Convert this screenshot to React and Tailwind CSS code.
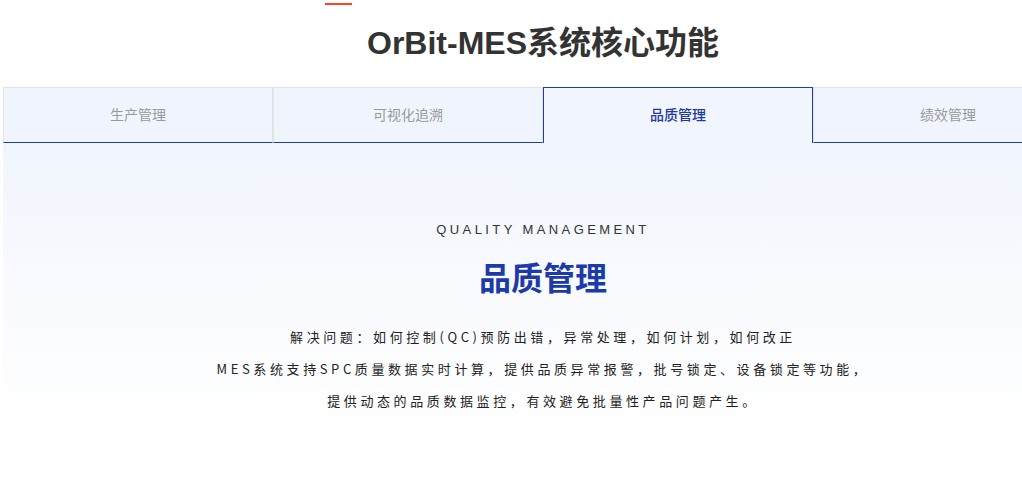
import React from "react";

const tabs = [
  { label: "生产管理", active: false },
  { label: "可视化追溯", active: false },
  { label: "品质管理", active: true },
  { label: "绩效管理", active: false },
];

const cjk = '"Liberation Sans", "Noto Sans CJK SC", sans-serif';

export default function App() {
  return (
    <div className="w-full min-h-[497px] overflow-hidden bg-white" style={{ fontFamily: cjk }}>
      <div className="w-[1080px] ml-[3px] flex flex-col">
        <div className="mt-[3px] ml-[322px] h-[2px] w-[27px] bg-[#ff4422]" />
        <h1 className="mt-[18px] h-[40px] leading-[40px] text-center text-[32px] font-bold text-[#333333]">
          OrBit-MES系统核心功能
        </h1>
        <div className="mt-[24px] flex">
          {tabs.map((t) =>
            t.active ? (
              <div
                key={t.label}
                className="w-[270px] h-[56px] flex items-center justify-center border-t border-l border-r border-[#1e3fa8] bg-[#f1f5fd] text-[14px] font-medium text-[#1c3a9e]"
              >
                {t.label}
              </div>
            ) : (
              <div
                key={t.label}
                className="w-[270px] h-[56px] flex items-center justify-center border-t border-l border-r border-t-[#e3e3e3] border-l-[#e3e3e3] border-r-[#e3e3e3] border-b border-b-[#1e3fa8] bg-[#f0f5fd] text-[14px] text-[#9a9a9a]"
              >
                {t.label}
              </div>
            )
          )}
        </div>
        <div className="pt-[77px] pb-[10px] flex flex-col items-center bg-gradient-to-b from-[#f1f5fd] to-[#ffffff]">
          <div
            className="h-[20px] leading-[20px] text-[13px] tracking-[3.4px] text-[#333333]"
            style={{ fontFamily: '"Liberation Sans", Arial, sans-serif' }}
          >
            QUALITY MANAGEMENT
          </div>
          <h2 className="mt-[19px] h-[40px] leading-[40px] text-[32px] font-bold text-[#1d3ba8]">
            品质管理
          </h2>
          <div
            className="mt-[22px] text-center text-[13px] leading-[32px] tracking-[3.6px] text-[#222222]"
            style={{ fontFamily: '"Noto Sans CJK SC", sans-serif' }}
          >
            <p>解决问题：如何控制(QC)预防出错，异常处理，如何计划，如何改正</p>
            <p>MES系统支持SPC质量数据实时计算，提供品质异常报警，批号锁定、设备锁定等功能，</p>
            <p>提供动态的品质数据监控，有效避免批量性产品问题产生。</p>
          </div>
        </div>
      </div>
    </div>
  );
}
